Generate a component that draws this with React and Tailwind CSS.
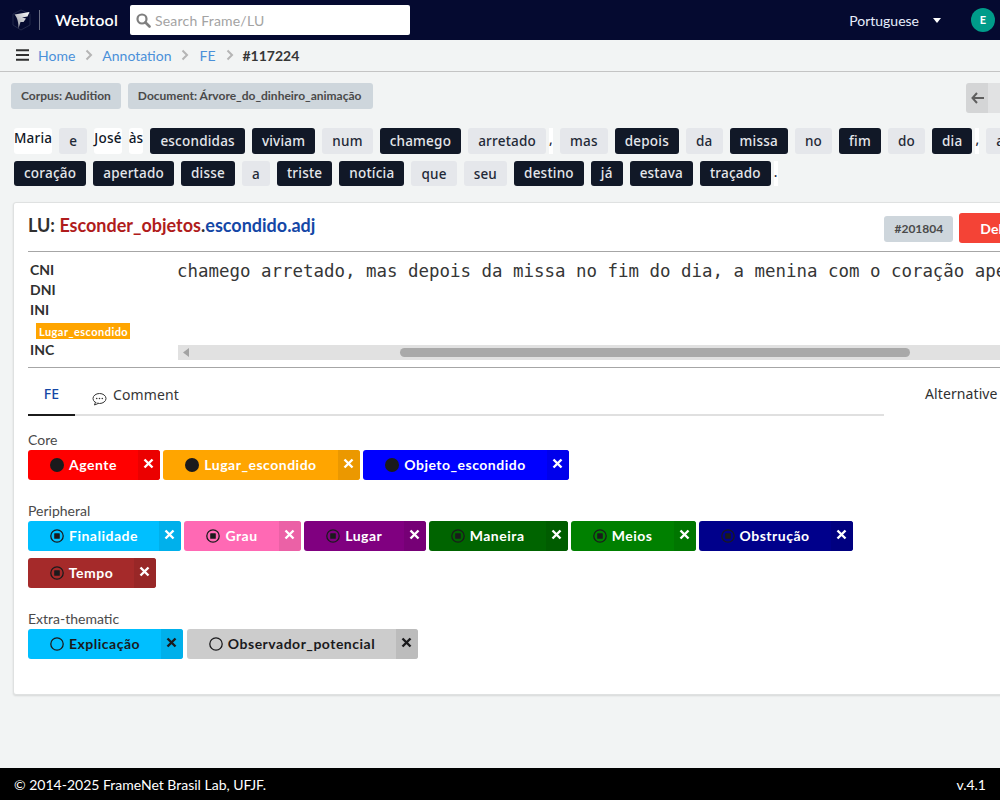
const lato = "font-['Lato','Liberation_Sans',sans-serif]";
const noto = "font-['Noto_Sans','Lato',sans-serif]";

function Tok({ t, k }) {
  const base = "h-full rounded-[3px] text-[13.5px] font-medium whitespace-nowrap flex-none";
  if (k === "d") return <span className={`${base} flex items-center px-[10px] bg-[#111827] text-[#e5e7eb] leading-none pt-px`}>{t}</span>;
  if (k === "g") return <span className={`${base} flex items-center px-[10px] bg-[#e5e7eb] text-[#1f2937] leading-none pt-[2px]`}>{t}</span>;
  if (k === "p") return <span className="h-full flex-none bg-white text-[13.5px] font-medium text-[#1f2937] -ml-[4px] leading-[22px]">{t}</span>;
  return <span className={`${base} bg-white text-[#111827] leading-[20px]`}>{t}</span>;
}

const row1 = [["Maria","w"],["e","g"],["José","w"],["às","w"],["escondidas","d"],["viviam","d"],["num","g"],["chamego","d"],["arretado","g"],[",","p"],["mas","g"],["depois","d"],["da","g"],["missa","d"],["no","g"],["fim","d"],["do","g"],["dia","d"],[",","p"],["a","g"]];
const row2 = [["coração","d"],["apertado","d"],["disse","d"],["a","g"],["triste","d"],["notícia","d"],["que","g"],["seu","g"],["destino","d"],["já","d"],["estava","d"],["traçado","d"],[".","p"]];

function Mark({ kind, color }) {
  if (kind === "core") return <svg width="14" height="14" viewBox="0 0 14 14" className="flex-none"><circle cx="7" cy="7" r="7" fill={color} /></svg>;
  return (
    <svg width="14" height="14" viewBox="0 0 14 14" className="flex-none">
      <circle cx="7" cy="7" r="6.2" fill="none" stroke={color} strokeWidth="1.3" />
      {kind === "peri" && <rect x="4.2" y="4.2" width="5.6" height="5.6" rx="0.6" fill={color} />}
    </svg>
  );
}

function Chip({ name, bg, xbg, w, xw = 22, kind, dark }) {
  const mark = "#1a1a1c";
  const fg = dark ? "text-[#1a1a1c]" : "text-white";
  return (
    <div className={`flex h-[30px] rounded-[3px] overflow-hidden flex-none ${fg}`} style={{ width: w, background: bg }}>
      <div className="flex-1 flex items-center justify-center gap-[5px] text-[14px] font-bold tracking-[0.5px] pl-[1px]">
        <Mark kind={kind} color={mark} />
        <span className="leading-none">{name}</span>
      </div>
      <div className="flex items-center justify-center flex-none pb-[4px] pr-[1px]" style={{ width: xw, background: xbg }}>
        <svg width="11" height="11" viewBox="0 0 11 11"><path d="M1.5 1.5 L9.5 9.5 M9.5 1.5 L1.5 9.5" stroke="currentColor" strokeWidth="2.4" fill="none" /></svg>
      </div>
    </div>
  );
}

function Sep() {
  return <svg width="8" height="12" viewBox="0 0 8 12" className="ml-[10px] mr-[9px] flex-none"><path d="M1.5 1.5 L6 6 L1.5 10.5" fill="none" stroke="#b5b5b5" strokeWidth="2" /></svg>;
}

export default function App() {
  return (
    <div className={`${lato} w-[1000px] h-[800px] overflow-hidden flex flex-col bg-[#f2f4f4] text-[#303030]`}>
      {/* Top bar */}
      <header className="h-10 flex-none bg-[#050a30] flex items-center text-white">
        <svg width="22" height="22" viewBox="0 0 22 22" className="ml-[10px] flex-none">
          <defs>
            <linearGradient id="lg" x1="1" y1="0" x2="0" y2="1"><stop offset="0" stopColor="#ffffff" /><stop offset="1" stopColor="#8c8f99" /></linearGradient>
          </defs>
          <path d="M3 5 L11 1 L20 5 V16 L11 21 L3 16 Z" fill="none" stroke="#2a3050" strokeWidth="0.8" />
          <path d="M4.5 5.5 L19.5 3 L17.5 7.5 L12 8.5 L16 9.5 L13.5 13 L10.5 13 L8.5 19.5 C8.5 13 7.5 9 4.5 5.5 Z" fill="url(#lg)" />
        </svg>
        <div className="w-px h-5 bg-[#6b6f85] ml-[7px]" />
        <span className="ml-[15px] w-[61px] flex-none text-[16px] font-semibold tracking-[0.3px]">Webtool</span>
        <div className="ml-[14px] w-[280px] h-[30px] bg-white rounded-[2px] flex items-center pl-[6px]">
          <svg width="15" height="15" viewBox="0 0 15 15"><circle cx="6" cy="6" r="4.5" fill="none" stroke="#7f7f7f" strokeWidth="2.2" /><path d="M9.5 9.5 L13.5 13.5" stroke="#7f7f7f" strokeWidth="2.6" strokeLinecap="round" /></svg>
          <span className="ml-[4px] text-[14px] text-[#a3a3a3] tracking-[0.2px]">Search Frame/LU</span>
        </div>
        <span className="ml-auto text-[14px] text-[#e8eefc]">Portuguese</span>
        <svg width="8" height="5" viewBox="0 0 8 5" className="ml-[14px]"><path d="M0 0 H8 L4 5 Z" fill="#fff" /></svg>
        <div className="ml-[30px] mr-[5px] w-6 h-6 rounded-full bg-[#009c8a] flex items-center justify-center text-[11px] font-bold">E</div>
      </header>

      {/* Breadcrumb */}
      <nav className="h-8 flex-none border-b border-[#c4c4c4] flex items-center pl-4 text-[14px] pb-px">
        <svg width="13" height="12" viewBox="0 0 13 12" className="flex-none"><path d="M0 1.2 H13 M0 6 H13 M0 10.8 H13" stroke="#303030" strokeWidth="2" /></svg>
        <a className="ml-[9px] text-[#4a90d9]">Home</a>
        <Sep />
        <a className="text-[#4a90d9]">Annotation</a>
        <Sep />
        <a className="ml-[1px] text-[#4a90d9]">FE</a>
        <Sep />
        <span className="font-bold text-[#363636]">#117224</span>
      </nav>

      {/* Tags */}
      <div className="flex-none flex items-start pl-[11px] pt-[11px] h-[48px]">
        <span className="h-[26px] flex items-center px-[10px] rounded-[3px] bg-[#ced6dc] text-[#4a4a4a] text-[12px] font-bold">Corpus: Audition</span>
        <span className="ml-[7px] h-[26px] flex items-center pl-[10px] pr-[12px] rounded-[3px] bg-[#ced6dc] text-[#4a4a4a] text-[12px] font-bold">Document: Árvore_do_dinheiro_animação</span>
        <div className="ml-auto flex h-[30px] w-[34px] rounded-l-[3px] overflow-hidden">
          <div className="w-[22px] bg-[#d4d5d6] flex items-center justify-center">
            <svg width="13" height="12" viewBox="0 0 13 12"><path d="M6 1 L1.5 6 L6 11 M1.5 6 H13" stroke="#5f5f5f" strokeWidth="2" fill="none" /></svg>
          </div>
          <div className="flex-1 bg-[#e1e2e3]" />
        </div>
      </div>

      {/* Sentence */}
      <div className={`flex-none pl-[14px] tracking-[0.22px] ${noto}`}>
        <div className="flex gap-[7px] mt-[8px] h-[26px]">{row1.map((x, i) => <Tok key={i} t={x[0]} k={x[1]} />)}</div>
        <div className="flex gap-[7px] mt-[7px] h-[25px]">{row2.map((x, i) => <Tok key={i} t={x[0]} k={x[1]} />)}</div>
      </div>

      {/* Card */}
      <section className="flex-none mt-[16px] ml-[13px] w-[1100px] h-[493px] bg-white rounded-[3px] border border-[#dfe1e1] shadow-[0_1px_2px_rgba(0,0,0,0.12)] pl-[14px]">
        <div className="flex items-start h-[48px] w-[1060px]">
          <h2 className="text-[18px] font-bold mt-[10px] text-[#303030] leading-[24px]">
            LU: <span className="text-[#b01c1c]">Esconder_objetos</span><span className="text-[#303030]">.</span><span className="text-[#1447a6]">escondido.adj</span>
          </h2>
          <span className="ml-[569px] mt-[13px] w-[69px] h-[26px] rounded-[3px] bg-[#ced6dc] text-[#4a4a4a] text-[12px] font-bold flex items-center justify-center">#201804</span>
          <span className="ml-[6px] mt-[10px] w-[90px] h-[30px] rounded-[3px] bg-[#f44336] text-white text-[14px] font-bold flex items-center pl-[21px]">Delete</span>
        </div>
        <div className="h-px bg-[#a6a6a6] w-[1060px]" />
        <div className="flex h-[115px] w-[1060px]">
          <div className="w-[150px] flex-none pl-[2px] pt-[8px] text-[14px] font-bold text-[#303030] leading-[20px]">
            <div>CNI</div>
            <div>DNI</div>
            <div>INI</div>
            <div className="h-[20px] flex items-center pt-[2px]">
              <span className="ml-[6px] h-4 w-[94px] bg-[#ffa500] text-white text-[11px] font-bold tracking-[0.45px] flex items-center pl-[3px] leading-none">Lugar_escondido</span>
            </div>
            <div>INC</div>
          </div>
          <div className="flex-1 min-w-0 flex flex-col">
            <div className="pt-[7px] -ml-[1px] h-[93px] font-['DejaVu_Sans_Mono',monospace] text-[17.46px] leading-[24px] text-[#363636] whitespace-nowrap overflow-hidden">
              chamego arretado, mas depois da missa no fim do dia, a menina com o coração apertado disse a triste notícia
            </div>
            <div className="h-[15px] bg-[#e1e1e1] relative flex items-center">
              <svg width="8" height="9" viewBox="0 0 8 9" className="ml-[4px]"><path d="M7 0 V9 L1 4.5 Z" fill="#a3a3a3" /></svg>
              <div className="absolute left-[222px] top-[3px] w-[510px] h-[9px] rounded-full bg-[#a9a9a9]" />
            </div>
          </div>
        </div>
        <div className="h-px bg-[#a6a6a6] w-[1060px]" />

        {/* Tabs */}
        <div className={`flex w-[1060px] mt-[12px] tracking-[0.1px] ${noto}`}>
          <div className="w-[856px] flex-none h-[36px] border-b-2 border-[#e0e0e0] flex text-[14px]">
            <div className="w-[47px] h-[36px] border-b-2 border-[#1b1b1b] flex items-center justify-center text-[#1447a6] font-medium pb-[8px]">FE</div>
            <div className="ml-[17px] flex items-center h-[34px] pb-[6px] text-[#363636]">
              <svg width="15" height="14" viewBox="0 0 15 14" className="mt-[10px]"><ellipse cx="7.5" cy="6.5" rx="6.5" ry="5" fill="none" stroke="#363636" strokeWidth="1" /><path d="M3.5 10 L2.5 13 L6.5 11.3" fill="#fff" stroke="#363636" strokeWidth="1" /><circle cx="4.7" cy="6.5" r="0.8" fill="#363636" /><circle cx="7.5" cy="6.5" r="0.8" fill="#363636" /><circle cx="10.3" cy="6.5" r="0.8" fill="#363636" /></svg>
              <span className="ml-[6px]">Comment</span>
            </div>
          </div>
          <div className="ml-[41px] text-[14px] text-[#303030] mt-[3px]">Alternative</div>
        </div>

        {/* Groups */}
        <div className="text-[14px] text-[#4a4a4a] leading-[18px] mt-[15px]">Core</div>
        <div className="flex gap-[3px] mt-[1px]">
          <Chip name="Agente" bg="#ff0000" xbg="#eb0000" w={132} kind="core" />
          <Chip name="Lugar_escondido" bg="#ffa500" xbg="#eb9800" w={197} kind="core" />
          <Chip name="Objeto_escondido" bg="#0000ff" xbg="#0000eb" w={206} kind="core" />
        </div>

        <div className="text-[14px] text-[#4a4a4a] leading-[18px] mt-[22px]">Peripheral</div>
        <div className="flex flex-wrap gap-x-[3px] gap-y-[7px] mt-[1px] w-[850px]">
          <Chip name="Finalidade" bg="#00bfff" xbg="#00b0eb" w={153} kind="peri" />
          <Chip name="Grau" bg="#ff69b4" xbg="#eb61a6" w={117} kind="peri" />
          <Chip name="Lugar" bg="#800080" xbg="#760076" w={121.6} kind="peri" />
          <Chip name="Maneira" bg="#006400" xbg="#005c00" w={139} kind="peri" />
          <Chip name="Meios" bg="#008000" xbg="#007600" w={125} kind="peri" />
          <Chip name="Obstrução" bg="#00008b" xbg="#000080" w={154} kind="peri" />
          <Chip name="Tempo" bg="#a52a2a" xbg="#982727" w={128} kind="peri" />
        </div>

        <div className="text-[14px] text-[#4a4a4a] leading-[18px] mt-[22px]">Extra-thematic</div>
        <div className="flex gap-[4px] mt-[1px]">
          <Chip name="Explicação" bg="#00bfff" xbg="#00b0eb" w={155} kind="ext" dark />
          <Chip name="Observador_potencial" bg="#cccccc" xbg="#bcbcbc" w={231} kind="ext" dark />
        </div>
      </section>

      <div className="flex-1" />
      <footer className="h-8 flex-none bg-black text-white text-[14px] flex items-center justify-between px-[14px]">
        <span>© 2014-2025 FrameNet Brasil Lab, UFJF.</span>
        <span>v.4.1</span>
      </footer>
    </div>
  );
}
